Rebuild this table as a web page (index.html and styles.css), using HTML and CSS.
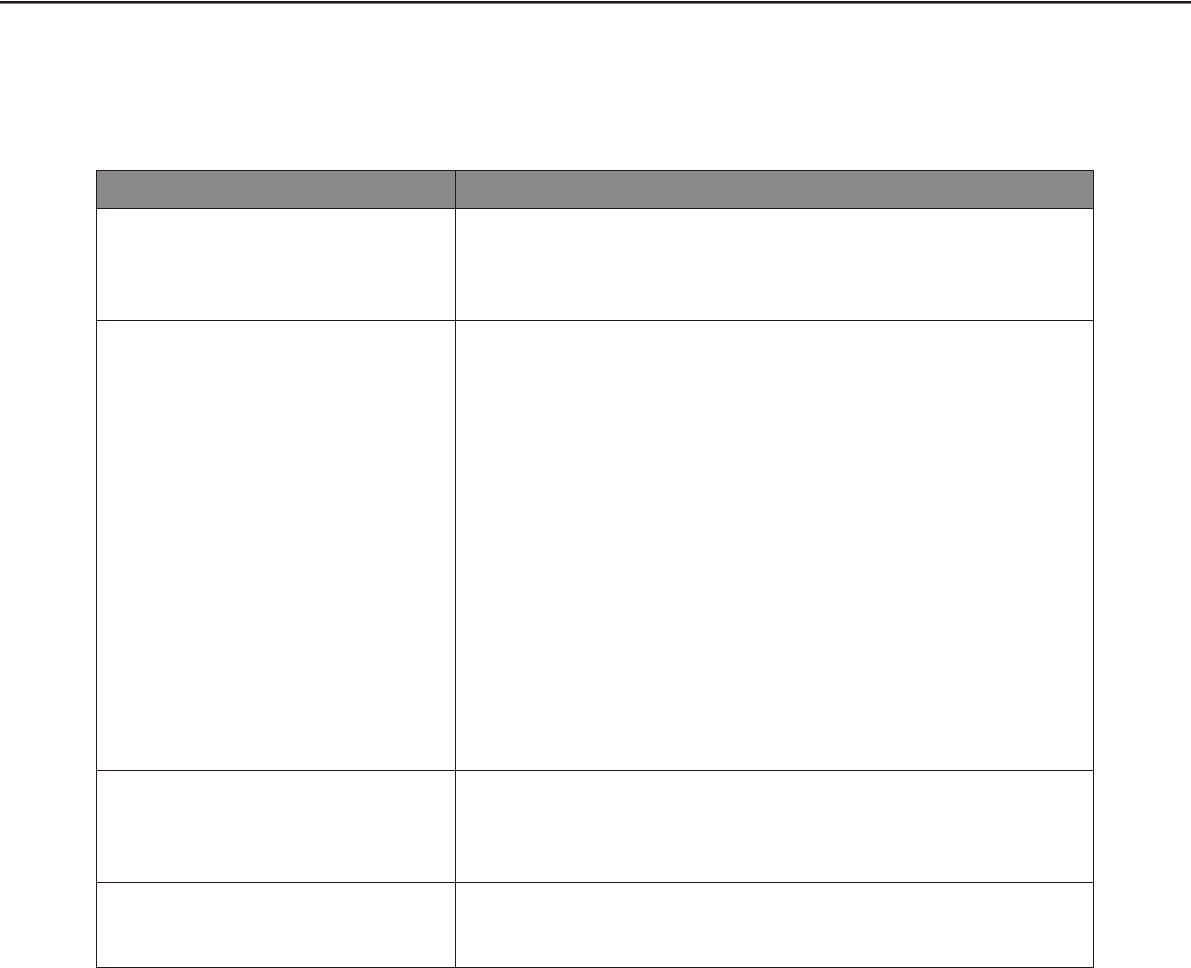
FILE: index.html
```html
<!DOCTYPE html>
<html lang="en">
<head>
<meta charset="utf-8">
<title>Table</title>
<link rel="stylesheet" href="styles.css">
</head>
<body>
<div class="rule"></div>
<div class="page">
  <div class="table">
    <div class="cell head"></div>
    <div class="cell head"></div>
    <div class="cell r1"></div>
    <div class="cell r1"></div>
    <div class="cell r2"></div>
    <div class="cell r2"></div>
    <div class="cell r3"></div>
    <div class="cell r3"></div>
    <div class="cell r4"></div>
    <div class="cell r4"></div>
  </div>
</div>
</body>
</html>
```
FILE: styles.css
```css
html, body {
  margin: 0;
  padding: 0;
  background: #ffffff;
  font-family: "Liberation Sans", Arial, sans-serif;
}
.rule {
  margin-top: 1px;
  height: 2px;
  background: #231815;
  box-shadow: 0 1px 0 #8a8584;
}
.page {
  padding: 167px 0 0 96px;
}
.table {
  display: grid;
  grid-template-columns: 358px 637px;
  grid-template-rows: 37px 111px 449px 111px 84px;
  gap: 1px;
  padding: 1px;
  width: 996px;
  background: #231815;
}
.cell {
  background: #ffffff;
}
.cell.head {
  background: #898989;
}
```
